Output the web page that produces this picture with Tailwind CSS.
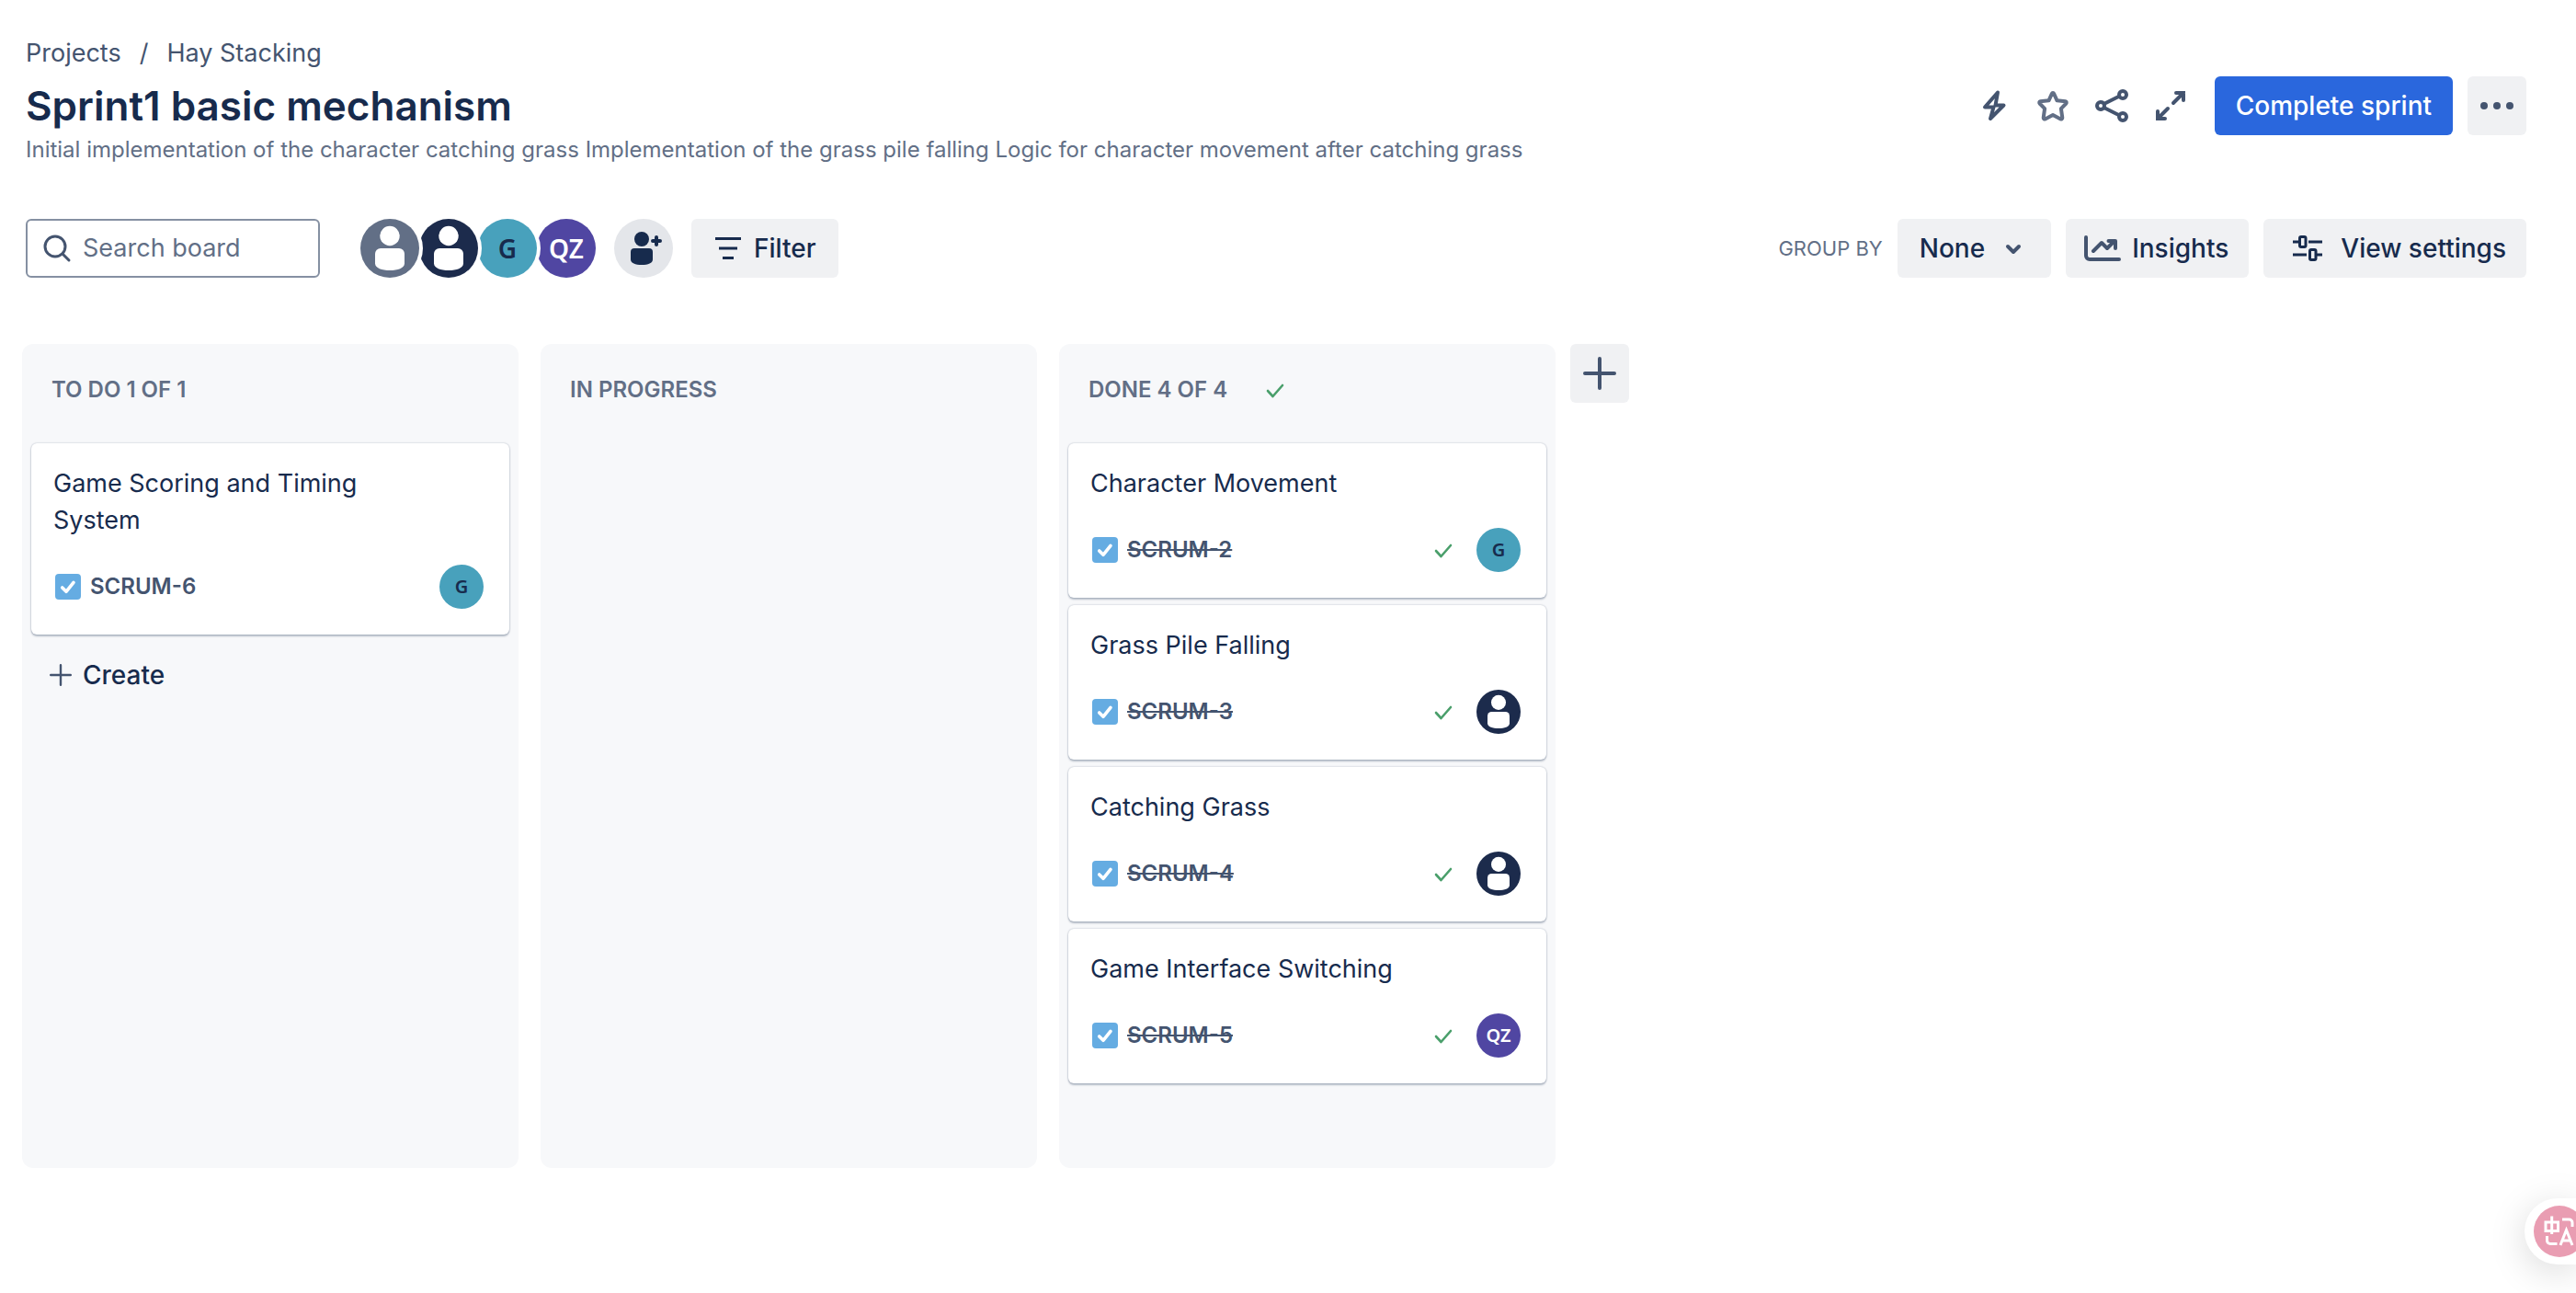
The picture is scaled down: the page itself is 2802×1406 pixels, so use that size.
<!DOCTYPE html>
<html lang="en">
<head>
<meta charset="utf-8">
<title>Sprint1 basic mechanism</title>
<script src="https://cdn.jsdelivr.net/npm/@tailwindcss/browser@4"></script>
</head>
<body class="min-h-screen bg-white font-['Inter',sans-serif] text-[27px] leading-[40px] text-[#172b4d]">

<svg class="hidden">
  <symbol id="person" viewBox="0 0 64 64"><circle cx="32" cy="18.500" r="10.700" fill="#fff"/><path d="M22 32h20a6 6 0 0 1 6 6v10.500c0 5-7.500 7.500-16 7.500s-16-2.500-16-7.500V38a6 6 0 0 1 6-6z" fill="#fff"/></symbol>
  <symbol id="tick" viewBox="0 0 24 24"><path d="M4 13l5.500 6L20 7" fill="none" stroke="#4a9f6b" stroke-width="2.600" stroke-linecap="round" stroke-linejoin="round"/></symbol>
  <symbol id="task" viewBox="0 0 28 28"><rect width="28" height="28" rx="4" fill="#65ace2"/><path d="M7.700 15l4.300 4.300 8-10" fill="none" stroke="#fff" stroke-width="3.600" stroke-linecap="round" stroke-linejoin="round"/></symbol>
</svg>

<header class="flex items-end justify-between pt-[38px] pr-[54px] pl-7">
  <div>
    <nav class="flex gap-5 text-[#44546f]" aria-label="Breadcrumb"><a href="#">Projects</a><span>/</span><a href="#">Hay Stacking</a></nav>
    <h1 class="mt-[9px] text-[44px] leading-[56px] font-semibold">Sprint1 basic mechanism</h1>
    <p class="text-[24px] leading-[40px] text-[#626f86]">Initial implementation of the character catching grass Implementation of the grass pile falling Logic for character movement after catching grass</p>
  </div>
  <div class="mb-9 flex items-center text-[28px] text-[#44546f]">
    <button class="flex size-16 items-center justify-center" aria-label="Automation"><svg class="size-12" viewBox="0 0 48 48" fill="none" stroke="currentColor" stroke-width="4" stroke-linejoin="round"><path d="M28 9.500L14 25.500h9.500L20 38l14.500-14.500h-9z"/></svg></button>
    <button class="flex size-16 items-center justify-center" aria-label="Star"><svg class="size-12" viewBox="0 0 48 48" fill="none" stroke="#626f86" stroke-width="4" stroke-linejoin="round"><path d="M22.900 10.800a1.200 1.200 0 0 1 2.200 0L28.500 18.300l9.200 1a1.300 1.300 0 0 1 .700 2.200l-5.500 5.600 1.400 10a1.300 1.300 0 0 1-1.900 1.300L24 34l-8.400 4.400a1.300 1.300 0 0 1-1.900-1.300l1.400-10-5.500-5.600a1.300 1.300 0 0 1 .700-2.200l9.200-1z"/></svg></button>
    <button class="flex size-16 items-center justify-center" aria-label="Share"><svg class="size-12" viewBox="0 0 48 48" fill="none" stroke="currentColor" stroke-width="4"><circle cx="12" cy="24" r="4"/><circle cx="36" cy="12" r="4"/><circle cx="36" cy="36" r="4"/><path d="M15.500 22L32.500 13.500M15.500 26l17 8.500"/></svg></button>
    <button class="flex size-16 items-center justify-center" aria-label="Full screen"><svg class="size-12" viewBox="0 0 48 48" fill="none" stroke="currentColor" stroke-width="4" stroke-linecap="round"><path d="M30 10h8v8M38 10L27 21M18 38h-8v-8M10 38l11-11"/></svg></button>
    <button class="ml-4 h-16 rounded-md bg-[#2a67dd] px-[23px] font-medium text-white">Complete sprint</button>
    <button class="ml-4 flex size-16 items-center justify-center rounded-md bg-[#f0f1f3]" aria-label="More"><svg class="size-12" viewBox="0 0 48 48" fill="currentColor"><circle cx="10" cy="24" r="4"/><circle cx="24" cy="24" r="4"/><circle cx="38" cy="24" r="4"/></svg></button>
  </div>
</header>

<div class="mt-[55px] flex items-center pr-[54px] pl-7">
  <label class="flex h-16 w-80 items-center gap-3 rounded-md border-2 border-[#8590a2] px-4">
    <svg class="size-8 shrink-0" viewBox="0 0 32 32" fill="none" stroke="#44546f" stroke-width="3" stroke-linecap="round"><circle cx="14" cy="14" r="11"/><path d="M22 22l7 7"/></svg>
    <input class="w-full min-w-0 outline-none placeholder:text-[#626f86]" type="text" placeholder="Search board" aria-label="Search board">
  </label>
  <div class="ml-11 flex text-[28px]">
    <span class="z-40 size-16 rounded-full bg-[#626f86] ring-4 ring-white"><svg class="size-16"><use href="#person"/></svg></span>
    <span class="z-30 size-16 rounded-full bg-[#1c2b4c] ring-4 ring-white"><svg class="size-16"><use href="#person"/></svg></span>
    <span class="z-20 flex size-16 items-center justify-center rounded-full bg-[#48a1bc] font-['Noto_Sans',sans-serif] font-semibold ring-4 ring-white">G</span>
    <span class="z-10 flex size-16 items-center justify-center rounded-full bg-[#5046a2] font-['Noto_Sans',sans-serif] font-semibold text-white">QZ</span>
  </div>
  <button class="ml-5 rounded-full bg-[#e4e6ea]" aria-label="Add people"><svg class="size-16" viewBox="0 0 64 64" fill="#172b4d"><circle cx="30" cy="22" r="8"/><path d="M22 32h16a4 4 0 0 1 4 4v8c0 4-5 6-12 6s-12-2-12-6v-8a4 4 0 0 1 4-4z"/><path d="M46 20v8M42 24h8" stroke="#172b4d" stroke-width="4" stroke-linecap="round"/></svg></button>
  <button class="ml-5 flex h-16 items-center gap-3 rounded-md bg-[#f0f1f3] px-6 text-[28px] font-medium"><svg class="size-8" viewBox="0 0 32 32" stroke="#172b4d" stroke-width="3"><path d="M2 5.500h28M6 16h20M10 26.500h12"/></svg>Filter</button>
  <div class="ml-auto flex items-center gap-4 text-[28px] font-medium">
    <span class="text-[22px] font-normal text-[#626f86]">GROUP BY</span>
    <button class="flex h-16 items-center gap-4 rounded-md bg-[#f0f1f3] px-6">None<svg class="size-8" viewBox="0 0 32 32" fill="none" stroke="#44546f" stroke-width="4" stroke-linecap="round" stroke-linejoin="round"><path d="M9 14l6 6 6-6"/></svg></button>
    <button class="flex h-16 items-center gap-3 rounded-md bg-[#f0f1f3] pr-[22px] pl-5"><svg class="h-9 w-10" viewBox="0 0 40 36" fill="none" stroke="#44546f" stroke-width="4" stroke-linecap="round" stroke-linejoin="round"><path d="M2 6v20a4 4 0 0 0 4 4h32M10 21l9-9 6 6 8-8M26.500 10H34v8"/></svg>Insights</button>
    <button class="flex h-16 items-center gap-5 rounded-md bg-[#f0f1f3] pr-[22px] pl-8"><svg class="size-8" viewBox="0 0 32 32" fill="none" stroke="#172b4d" stroke-width="3"><path d="M0 9h7M17 9h15M0 23h15M25 23h7"/><rect x="7.500" y="3.500" width="6.500" height="11" rx="1.500"/><rect x="18.500" y="17.500" width="6.500" height="11" rx="1.500"/></svg>View settings</button>
  </div>
</div>

<main class="mt-[72px] flex min-h-[896px] items-stretch gap-6 pl-6">
  <section class="w-[540px] rounded-xl bg-[#f7f8fa] px-[10px]">
    <h2 class="px-[22px] pt-[30px] pb-[38px] text-[24px] font-semibold text-[#626f86]">TO DO 1 OF 1</h2>
    <article class="rounded-md bg-white px-6 pt-6 pb-7 shadow-[0_2px_2px_#091e4240,0_0_2px_#091e424f]">
      <p class="pr-24">Game Scoring and Timing System</p>
      <div class="mt-7 flex h-12 items-center pr-1"><svg class="ml-[2px] size-7"><use href="#task"/></svg><a href="#" class="ml-[10px] text-[24px] font-semibold text-[#44546f]">SCRUM-6</a><span class="ml-auto flex size-12 items-center justify-center rounded-full bg-[#48a1bc] font-['Noto_Sans',sans-serif] text-[20px] font-semibold">G</span></div>
    </article>
    <button class="mt-6 flex items-center gap-3 px-5 text-[28px] font-medium"><svg class="size-6" viewBox="0 0 24 24" stroke="#44546f" stroke-width="2.400" stroke-linecap="round"><path d="M12 1.200v21.600M1.200 12h21.600"/></svg>Create</button>
  </section>
  <section class="w-[540px] rounded-xl bg-[#f7f8fa] px-[10px]">
    <h2 class="px-[22px] pt-[30px] pb-[38px] text-[24px] font-semibold text-[#626f86]">IN PROGRESS</h2>
  </section>
  <section class="w-[540px] rounded-xl bg-[#f7f8fa] px-[10px]">
    <h2 class="flex items-center gap-10 px-[22px] pt-[30px] pb-[38px] text-[24px] font-semibold text-[#626f86]">DONE 4 OF 4<svg class="size-6"><use href="#tick"/></svg></h2>
    <div class="flex flex-col gap-2">
      <article class="rounded-md bg-white px-6 pt-6 pb-7 shadow-[0_2px_2px_#091e4240,0_0_2px_#091e424f]">
        <p>Character Movement</p>
        <div class="mt-7 flex h-12 items-center pr-1"><svg class="ml-[2px] size-7"><use href="#task"/></svg><a href="#" class="ml-[10px] text-[24px] font-semibold text-[#44546f] line-through">SCRUM-2</a><svg class="mr-6 ml-auto size-6"><use href="#tick"/></svg><span class="flex size-12 items-center justify-center rounded-full bg-[#48a1bc] font-['Noto_Sans',sans-serif] text-[20px] font-semibold">G</span></div>
      </article>
      <article class="rounded-md bg-white px-6 pt-6 pb-7 shadow-[0_2px_2px_#091e4240,0_0_2px_#091e424f]">
        <p>Grass Pile Falling</p>
        <div class="mt-7 flex h-12 items-center pr-1"><svg class="ml-[2px] size-7"><use href="#task"/></svg><a href="#" class="ml-[10px] text-[24px] font-semibold text-[#44546f] line-through">SCRUM-3</a><svg class="mr-6 ml-auto size-6"><use href="#tick"/></svg><span class="size-12 rounded-full bg-[#1c2b4c]"><svg class="size-12"><use href="#person"/></svg></span></div>
      </article>
      <article class="rounded-md bg-white px-6 pt-6 pb-7 shadow-[0_2px_2px_#091e4240,0_0_2px_#091e424f]">
        <p>Catching Grass</p>
        <div class="mt-7 flex h-12 items-center pr-1"><svg class="ml-[2px] size-7"><use href="#task"/></svg><a href="#" class="ml-[10px] text-[24px] font-semibold text-[#44546f] line-through">SCRUM-4</a><svg class="mr-6 ml-auto size-6"><use href="#tick"/></svg><span class="size-12 rounded-full bg-[#1c2b4c]"><svg class="size-12"><use href="#person"/></svg></span></div>
      </article>
      <article class="rounded-md bg-white px-6 pt-6 pb-7 shadow-[0_2px_2px_#091e4240,0_0_2px_#091e424f]">
        <p>Game Interface Switching</p>
        <div class="mt-7 flex h-12 items-center pr-1"><svg class="ml-[2px] size-7"><use href="#task"/></svg><a href="#" class="ml-[10px] text-[24px] font-semibold text-[#44546f] line-through">SCRUM-5</a><svg class="mr-6 ml-auto size-6"><use href="#tick"/></svg><span class="flex size-12 items-center justify-center rounded-full bg-[#5046a2] font-['Noto_Sans',sans-serif] text-[20px] font-semibold text-white">QZ</span></div>
      </article>
    </div>
  </section>
  <button class="-ml-2 flex size-16 items-center justify-center rounded-md bg-[#f0f1f3]" aria-label="Add column"><svg class="size-9" viewBox="0 0 36 36" stroke="#44546f" stroke-width="4" stroke-linecap="round"><path d="M18 2v32M2 18h32"/></svg></button>
</main>

<div class="fixed right-0 bottom-[31px] flex h-[72px] w-14 items-center rounded-l-full bg-white pl-[10px] shadow-[0_8px_40px_#00000026]">
  <button class="overflow-hidden" aria-label="Translate"><svg class="h-14 w-[46px]" viewBox="0 0 46 56" fill="none" stroke="#fff" stroke-width="3"><circle cx="28" cy="28" r="28" fill="#e99db2" stroke="none"/><path d="M13 18h13.500v9.500H13zM19.700 11.500V31"/><path d="M31 15h7.500a3.500 3.500 0 0 1 3.500 3.500V23M14.500 33v5a3.500 3.500 0 0 0 3.500 3.500h7.500M29 43l6.500-16.500L42 43M31 38h9"/></svg></button>
</div>
</body>
</html>
